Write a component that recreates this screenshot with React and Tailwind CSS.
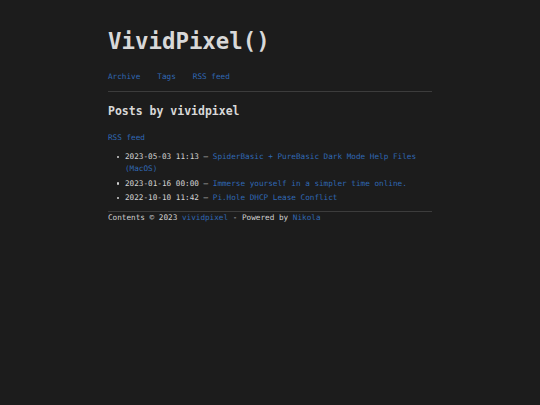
import React from 'react';

const posts = [
  { date: '2023-05-03 11:13', title: 'SpiderBasic + PureBasic Dark Mode Help Files (MacOS)' },
  { date: '2023-01-16 00:00', title: 'Immerse yourself in a simpler time online.' },
  { date: '2022-10-10 11:42', title: 'Pi.Hole DHCP Lease Conflict' },
];

const mono = { fontFamily: "'DejaVu Sans Mono', 'Liberation Mono', monospace" };

export default function App() {
  return (
    <div className="min-h-[405px] w-full bg-[#1c1c1c] text-[#d2d2d2]" style={mono}>
      <div className="mx-auto w-[324px] pt-[27px] text-[7.68px] leading-[12px]">
        <h1 className="text-[22.4px] leading-[29px] font-bold text-[#d8d8d8]">VividPixel()</h1>

        {/* Nav */}
        <nav className="mt-[15px] flex gap-[17px] text-[#3068b4]">
          <a href="#">Archive</a>
          <a href="#">Tags</a>
          <a href="#">RSS feed</a>
        </nav>
        <div className="mt-[8px] h-px bg-[#3c3c3c]" />

        <h2 className="mt-[12px] text-[11.5px] leading-[14px] font-bold text-[#d8d8d8]">Posts by vividpixel</h2>

        <div className="mt-[14px]">
          <a href="#" className="text-[#3068b4]">RSS feed</a>
        </div>

        <ul className="mt-[7px] flex flex-col gap-[2.5px]">
          {posts.map((p) => (
            <li key={p.date} className="flex">
              <span className="flex h-[12px] w-[17px] shrink-0 items-center justify-end pr-[6px]">
                <span className="h-[2.5px] w-[2.5px] rounded-full bg-[#d2d2d2]" />
              </span>
              <p className="w-[300px]">
                {p.date} — <a href="#" className="text-[#3068b4]">{p.title}</a>
              </p>
            </li>
          ))}
        </ul>

        {/* Footer */}
        <footer className="mt-[7px] border-t border-[#3c3c3c]">
          Contents © 2023 <a href="#" className="text-[#3068b4]">vividpixel</a> - Powered by{' '}
          <a href="#" className="text-[#3068b4]">Nikola</a>
        </footer>
      </div>
    </div>
  );
}
